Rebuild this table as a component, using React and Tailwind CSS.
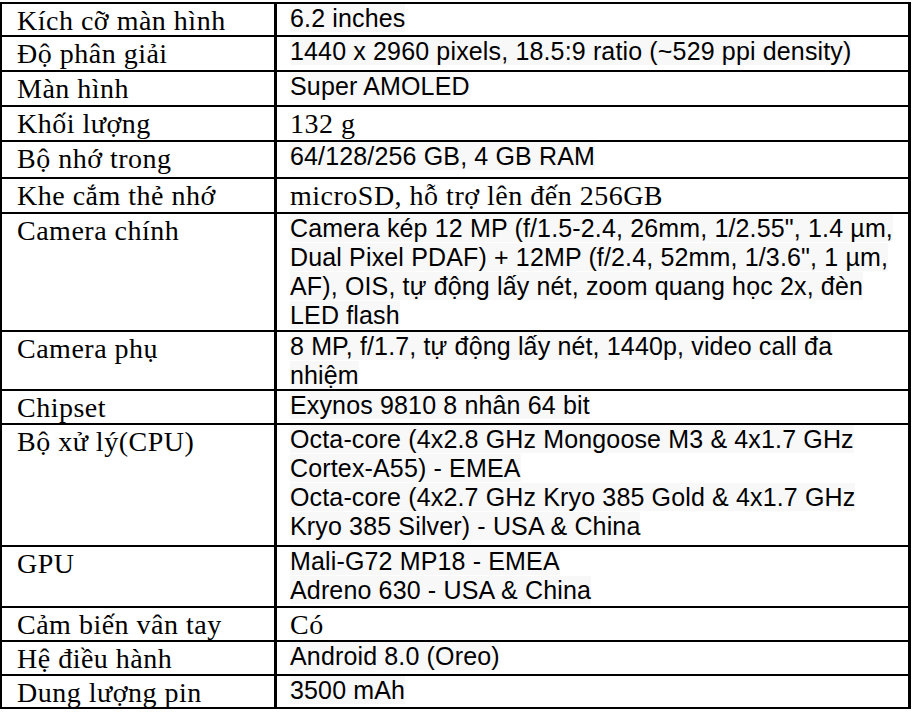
import React from 'react'

const serif = "font-['Liberation_Serif','Times_New_Roman',serif] tracking-[0.5px]"
const sans = "font-['Liberation_Sans',Arial,sans-serif] tracking-[0.15px]"

// h = cell height in px, serif = right column in serif instead of sans
const specs = [
  { label: 'Kích cỡ màn hình', value: ['6.2 inches'], h: 'h-[31px]' },
  { label: 'Độ phân giải', value: ['1440 x 2960 pixels, 18.5:9 ratio (~529 ppi density)'], h: 'h-[33px]' },
  { label: 'Màn hình', value: ['Super AMOLED'], h: 'h-[33px]' },
  { label: 'Khối lượng', value: ['132 g'], serif: true, h: 'h-[33px]' },
  { label: 'Bộ nhớ trong', value: ['64/128/256 GB, 4 GB RAM'], h: 'h-[35px]' },
  { label: 'Khe cắm thẻ nhớ', value: ['microSD, hỗ trợ lên đến 256GB'], serif: true, h: 'h-[33px]' },
  {
    label: 'Camera chính',
    value: [
      'Camera kép 12 MP (f/1.5-2.4, 26mm, 1/2.55", 1.4 µm,',
      'Dual Pixel PDAF) + 12MP (f/2.4, 52mm, 1/3.6", 1 µm,',
      'AF), OIS, tự động lấy nét, zoom quang học 2x, đèn',
      'LED flash',
    ],
    h: 'h-[116px]',
  },
  { label: 'Camera phụ', value: ['8 MP, f/1.7, tự động lấy nét, 1440p, video call đa', 'nhiệm'], h: 'h-[57px]' },
  { label: 'Chipset', value: ['Exynos 9810 8 nhân 64 bit'], h: 'h-[32px]' },
  {
    label: 'Bộ xử lý(CPU)',
    value: [
      'Octa-core (4x2.8 GHz Mongoose M3 & 4x1.7 GHz',
      'Cortex-A55) - EMEA',
      'Octa-core (4x2.7 GHz Kryo 385 Gold & 4x1.7 GHz',
      'Kryo 385 Silver) - USA & China',
    ],
    h: 'h-[120px]',
  },
  { label: 'GPU', value: ['Mali-G72 MP18 - EMEA', 'Adreno 630 - USA & China'], h: 'h-[59px]' },
  { label: 'Cảm biến vân tay', value: ['Có'], serif: true, h: 'h-[32px]' },
  { label: 'Hệ điều hành', value: ['Android 8.0 (Oreo)'], h: 'h-[32px]' },
  { label: 'Dung lượng pin', value: ['3500 mAh'], h: 'h-[31px]' },
]

const App = () => {
  return (
    <div className="w-[914px] h-[712px] bg-white overflow-hidden">
      <div className="mt-[2px] w-[911px] grid grid-cols-[272px_631px] gap-x-[3px] gap-y-[2px] bg-black pt-[2px] pb-[2px] pl-[2px] pr-[3px] text-black">
        {specs.map((row) => (
          <React.Fragment key={row.label}>
            <div className={`${row.h} bg-white pl-[15px] pt-[1px] ${serif} text-[28px] leading-[31px] whitespace-nowrap`}>
              {row.label}
            </div>
            <div className={`${row.h} bg-white pl-[13px] whitespace-nowrap overflow-visible`}>
              {row.serif ? (
                <div className={`${serif} text-[28px] leading-[31px] pt-[1px]`}>{row.value[0]}</div>
              ) : (
                <div className={`${sans} text-[25px] leading-[29px]`}>
                  {row.value.map((line, i) => (
                    <React.Fragment key={i}>
                      <span className="bg-[#f8f8f8]">{line}</span>
                      {i < row.value.length - 1 && <br />}
                    </React.Fragment>
                  ))}
                </div>
              )}
            </div>
          </React.Fragment>
        ))}
      </div>
    </div>
  )
}

export default App
